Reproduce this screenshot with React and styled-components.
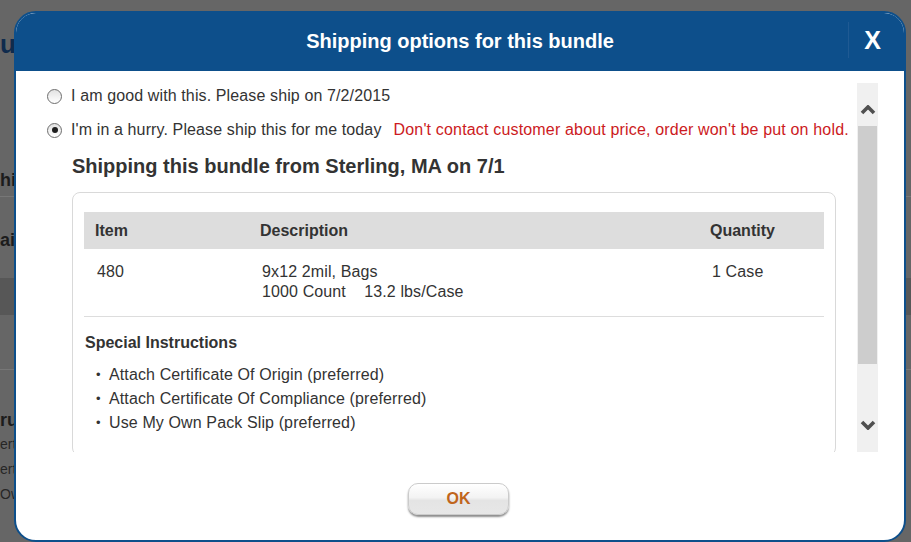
import React from "react";
import styled, { createGlobalStyle } from "styled-components";

const GlobalStyle = createGlobalStyle`
  html, body {
    margin: 0;
    padding: 0;
  }
  body {
    background: #666666;
    font-family: "Liberation Sans", Arial, sans-serif;
    overflow: hidden;
  }
`;

const options = [
  { id: "later", label: "I am good with this. Please ship on 7/2/2015", checked: false },
  {
    id: "today",
    label: "I'm in a hurry. Please ship this for me today",
    checked: true,
    note: "Don't contact customer about price, order won't be put on hold.",
  },
];

const instructions = [
  "Attach Certificate Of Origin (preferred)",
  "Attach Certificate Of Compliance (preferred)",
  "Use My Own Pack Slip (preferred)",
];

// the dimmed page that lies behind the dialog
const backItems = [
  { kind: "text", text: "utbound", top: 29, size: 26, lh: 30, bold: true, color: "#0f2b4d" },
  { kind: "text", text: "his bundle", top: 110, size: 18, lh: 22, bold: true, color: "#1c1c1c" },
  { kind: "rule", top: 5, height: 1, color: "#777777" },
  { kind: "text", text: "ails", top: 32, size: 18, lh: 22, bold: true, color: "#1c1c1c" },
  { kind: "rule", top: 27, height: 37, color: "#575757" },
  { kind: "rule", top: 54, height: 1, color: "#777777" },
  { kind: "text", text: "ructions", top: 39, size: 18, lh: 22, bold: true, color: "#1c1c1c" },
  { kind: "text", text: "ertificate Of Origin", top: 1, size: 14, lh: 25, color: "#262626" },
  { kind: "text", text: "ertificate Of Compliance", top: 0, size: 14, lh: 25, color: "#262626" },
  { kind: "text", text: "Own Pack Slip", top: 0, size: 14, lh: 25, color: "#262626" },
];

function Chevron({ down }) {
  return (
    <svg width="16" height="10" viewBox="0 0 16 10">
      <polyline
        points={down ? "2,2 8,8 14,2" : "2,8 8,2 14,8"}
        fill="none"
        stroke="#505050"
        strokeWidth="3.6"
      />
    </svg>
  );
}

function App() {
  return (
    <Screen>
      <GlobalStyle />
      <BackPage>
        {backItems.map((item, idx) =>
          item.kind === "text" ? (
            <BackText
              key={idx}
              $top={item.top}
              $size={item.size}
              $lh={item.lh}
              $bold={item.bold}
              $color={item.color}
            >
              {item.text}
            </BackText>
          ) : (
            <BackRule key={idx} $top={item.top} $height={item.height} $color={item.color} />
          )
        )}
      </BackPage>

      <Modal>
        <Header>
          <span />
          <Title>Shipping options for this bundle</Title>
          <Close>X</Close>
        </Header>

        <BodyRow>
          <Content>
            {options.map((opt) => (
              <Option key={opt.id}>
                <Radio $checked={opt.checked} />
                <span>{opt.label}</span>
                {opt.note && <Note>{opt.note}</Note>}
              </Option>
            ))}

            <Heading>Shipping this bundle from Sterling, MA on 7/1</Heading>

            <Card>
              <Table>
                <thead>
                  <tr>
                    <Th $width={165}>Item</Th>
                    <Th $width={450}>Description</Th>
                    <Th>Quantity</Th>
                  </tr>
                </thead>
                <tbody>
                  <tr>
                    <Td>480</Td>
                    <Td>
                      9x12 2mil, Bags
                      <br />
                      1000 Count&nbsp;&nbsp;&nbsp;&nbsp;13.2 lbs/Case
                    </Td>
                    <Td>1 Case</Td>
                  </tr>
                </tbody>
              </Table>

              <SubHeading>Special Instructions</SubHeading>
              <List>
                {instructions.map((item) => (
                  <ListItem key={item}>{item}</ListItem>
                ))}
              </List>
            </Card>
          </Content>

          <Scrollbar>
            <ScrollUp>
              <Chevron />
            </ScrollUp>
            <Thumb />
            <ScrollDown>
              <Chevron down />
            </ScrollDown>
          </Scrollbar>
        </BodyRow>

        <Footer>
          <OkButton>OK</OkButton>
        </Footer>
      </Modal>
    </Screen>
  );
}

const Screen = styled.div`
  position: relative;
  width: 911px;
  height: 542px;
  overflow: hidden;
  background: #666666;
`;

const BackPage = styled.div`
  display: flex;
  flex-direction: column;
`;

const BackText = styled.div`
  white-space: nowrap;
  margin-top: ${({ $top }) => $top}px;
  font-size: ${({ $size }) => $size}px;
  line-height: ${({ $lh }) => $lh}px;
  font-weight: ${({ $bold }) => ($bold ? 700 : 400)};
  color: ${({ $color }) => $color};
`;

const BackRule = styled.div`
  margin-top: ${({ $top }) => $top}px;
  height: ${({ $height }) => $height}px;
  background: ${({ $color }) => $color};
`;

const Modal = styled.div`
  position: absolute;
  left: 14px;
  top: 11px;
  width: 892px;
  height: 531px;
  box-sizing: border-box;
  border: 2px solid #0d4f8b;
  border-radius: 22px;
  background: #ffffff;
  overflow: hidden;
  display: flex;
  flex-direction: column;
`;

const Header = styled.div`
  height: 58px;
  flex-shrink: 0;
  background: #0d4f8b;
  display: grid;
  grid-template-columns: 56px 1fr 48px;
  padding-right: 8px;
  align-items: center;
`;

const Title = styled.h1`
  margin: -2px 0 0;
  text-align: center;
  color: #ffffff;
  font-size: 20px;
  font-weight: 700;
`;

const Close = styled.div`
  height: 36px;
  margin-top: -4px;
  border-left: 1px solid #1f5a93;
  display: flex;
  align-items: center;
  justify-content: center;
  color: #ffffff;
  font-size: 25px;
  font-weight: 700;
  cursor: pointer;
`;

const BodyRow = styled.div`
  display: flex;
  height: 369px;
  margin-top: 12px;
  margin-right: 26px;
  flex-shrink: 0;
`;

const Content = styled.div`
  flex: 1;
  overflow: hidden;
  padding: 3px 21px 0 31px;
  color: #333333;
  font-size: 16px;
  letter-spacing: 0.12px;
`;

const Option = styled.label`
  display: flex;
  align-items: center;
  height: 20px;
  margin-bottom: 14px;
  white-space: nowrap;
`;

const Radio = styled.span`
  position: relative;
  width: 15px;
  height: 15px;
  box-sizing: border-box;
  border: 1px solid #6e6e6e;
  border-radius: 50%;
  background: linear-gradient(#e2e2e2, #ffffff);
  margin-right: 9px;
  flex-shrink: 0;
  &::after {
    content: "";
    display: ${({ $checked }) => ($checked ? "block" : "none")};
    position: absolute;
    left: 3.5px;
    top: 3.5px;
    width: 6px;
    height: 6px;
    border-radius: 50%;
    background: #1e1e1e;
  }
`;

const Note = styled.span`
  color: #cc1a22;
  margin-left: 12px;
  letter-spacing: 0.17px;
`;

const Heading = styled.h2`
  margin: 0 0 14px 25px;
  font-size: 20px;
  line-height: 24px;
  font-weight: 700;
  color: #333333;
  letter-spacing: 0;
`;

const Card = styled.div`
  margin-left: 25px;
  border: 1px solid #d9d9d9;
  border-radius: 8px;
  padding: 19px 11px 20px;
`;

const Table = styled.table`
  width: 100%;
  border-collapse: collapse;
`;

const Th = styled.th`
  height: 37px;
  padding: 0 0 0 11px;
  background: #dddddd;
  text-align: left;
  font-size: 16px;
  font-weight: 700;
  color: #333333;
  letter-spacing: 0;
  width: ${({ $width }) => ($width ? `${$width}px` : "auto")};
  box-sizing: border-box;
`;

const Td = styled.td`
  padding: 13px 13px 14px;
  line-height: 20px;
  vertical-align: top;
  border-bottom: 1px solid #dddddd;
  font-size: 16px;
  color: #333333;
`;

const SubHeading = styled.h3`
  margin: 16px 0 0 1px;
  font-size: 16px;
  line-height: 20px;
  font-weight: 700;
  color: #333333;
  letter-spacing: 0;
`;

const List = styled.ul`
  list-style: none;
  margin: 10px 0 0;
  padding: 0 0 0 12px;
`;

const ListItem = styled.li`
  display: flex;
  line-height: 24px;
  &::before {
    content: "•";
    width: 13px;
    flex-shrink: 0;
    font-size: 13px;
  }
`;

const Scrollbar = styled.div`
  width: 21px;
  background: #f0f0f0;
  display: flex;
  flex-direction: column;
  flex-shrink: 0;
`;

const ScrollUp = styled.div`
  height: 43px;
  box-sizing: border-box;
  padding-top: 11px;
  display: flex;
  align-items: center;
  justify-content: center;
`;

const Thumb = styled.div`
  height: 238px;
  margin: 0 1px;
  background: #cdcdcd;
`;

const ScrollDown = styled.div`
  flex: 1;
  display: flex;
  align-items: flex-end;
  justify-content: center;
  padding-bottom: 22px;
`;

const Footer = styled.div`
  flex: 1;
  display: flex;
  justify-content: center;
  align-items: flex-start;
  padding-top: 31px;
`;

const OkButton = styled.button`
  width: 101px;
  height: 32px;
  margin-right: 3px;
  border: 1px solid #cbcbcb;
  border-radius: 10px;
  background: linear-gradient(#ffffff 0%, #f3f3f3 45%, #e4e4e4 55%, #e7e7e7 100%);
  box-shadow: 0 2px 2px rgba(0, 0, 0, 0.45);
  font-family: "Liberation Sans", Arial, sans-serif;
  font-size: 16px;
  font-weight: 700;
  color: #c0651c;
  cursor: pointer;
`;

export default App;
